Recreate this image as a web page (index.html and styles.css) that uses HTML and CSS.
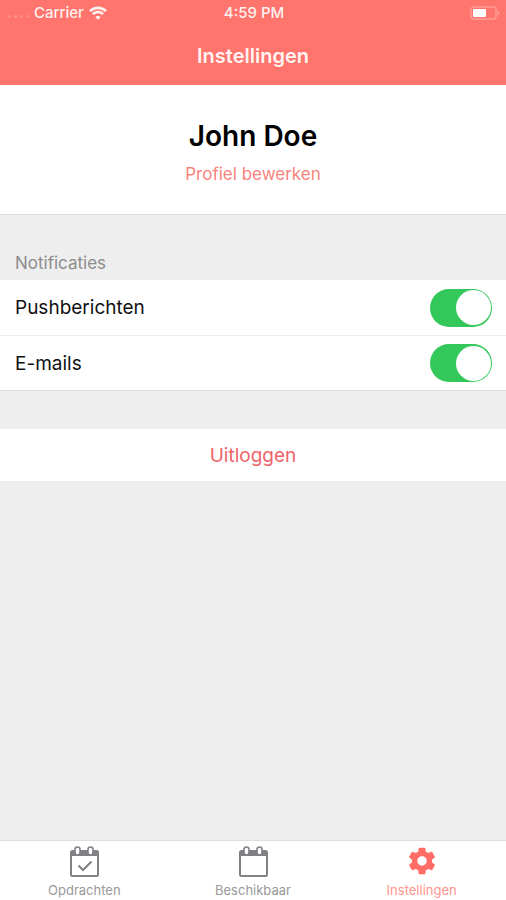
FILE: index.html
```html
<!DOCTYPE html>
<html lang="nl">
<head>
<meta charset="utf-8">
<meta name="viewport" content="width=device-width, initial-scale=1">
<title>Instellingen</title>
<link rel="stylesheet" href="styles.css">
</head>
<body>
<header class="header">
  <div class="status">
    <div class="status-left">
      <span class="signal"><i></i><i></i><i></i><i></i></span>
      <span>Carrier</span>
      <svg class="wifi" viewBox="0 0 18 14" aria-hidden="true">
        <path d="M1 5.2C5.5 .7 12.500 .7 17 5.200M3.900 8.100C6.800 5.300 11.200 5.300 14.100 8.100" fill="none" stroke="currentColor" stroke-width="2.600"/>
        <path d="M9 13.700L6.300 11C7.800 9.600 10.200 9.600 11.700 11Z" fill="currentColor"/>
      </svg>
    </div>
    <span class="time">4:59 PM</span>
    <svg class="battery" viewBox="0 0 30 14" aria-hidden="true">
      <rect x="1" y="1" width="25" height="12" rx="3" fill="none" stroke="#ff9c95" stroke-width="1.500"/>
      <rect x="3" y="3" width="13" height="8" rx="1" fill="#fff"/>
      <path d="M27.500 4.500Q32 7 27.500 9.500Z" fill="#ff9c95"/>
    </svg>
  </div>
  <h1 class="title">Instellingen</h1>
</header>
<main class="content">
  <section class="profile">
    <h2 class="name">John Doe</h2>
    <a class="edit" href="#profiel">Profiel bewerken</a>
  </section>
  <section>
    <h3 class="label">Notificaties</h3>
    <div class="list">
      <label class="row" for="push">Pushberichten<input class="switch" id="push" type="checkbox" checked></label>
      <label class="row" for="mail">E-mails<input class="switch" id="mail" type="checkbox" checked></label>
    </div>
  </section>
  <button class="logout" type="button">Uitloggen</button>
</main>
<nav class="tabs">
  <a class="tab" href="#opdrachten">
    <svg class="icon" viewBox="0 0 32 32" aria-hidden="true">
      <rect x="3" y="6" width="27" height="25" rx="1.500" fill="none" stroke="currentColor" stroke-width="2"/>
      <path d="M3 6H30V11H3Z" fill="currentColor"/>
      <rect x="7" y="2" width="5" height="8" rx="2.500" fill="#fff" stroke="currentColor" stroke-width="1.600"/>
      <rect x="20" y="2" width="5" height="8" rx="2.500" fill="#fff" stroke="currentColor" stroke-width="1.600"/>
      <path d="M10.500 20.500L15 25L23.500 16.500" fill="none" stroke="currentColor" stroke-width="2"/>
    </svg>
    <span>Opdrachten</span>
  </a>
  <a class="tab" href="#beschikbaar">
    <svg class="icon" viewBox="0 0 32 32" aria-hidden="true">
      <rect x="3" y="6" width="27" height="25" rx="1.500" fill="none" stroke="currentColor" stroke-width="2"/>
      <path d="M3 6H30V11H3Z" fill="currentColor"/>
      <rect x="7" y="2" width="5" height="8" rx="2.500" fill="#fff" stroke="currentColor" stroke-width="1.600"/>
      <rect x="20" y="2" width="5" height="8" rx="2.500" fill="#fff" stroke="currentColor" stroke-width="1.600"/>
    </svg>
    <span>Beschikbaar</span>
  </a>
  <a class="tab active" href="#instellingen" aria-current="page">
    <svg class="icon" viewBox="0 0 24 24" aria-hidden="true">
      <path fill="currentColor" d="M19.430 12.980c.04-.32.07-.64.07-.98s-.03-.66-.07-.98l2.110-1.650c.19-.15.24-.42.12-.64l-2-3.460c-.12-.22-.39-.3-.61-.22l-2.490 1c-.52-.4-1.080-.73-1.690-.98l-.38-2.650C14.460 2.180 14.250 2 14 2h-4c-.25 0-.46.18-.49.42l-.38 2.650c-.61.25-1.170.59-1.690.98l-2.490-1c-.23-.09-.49 0-.61.22l-2 3.460c-.13.22-.07.49.12.64l2.110 1.650c-.04.32-.07.65-.07.98s.03.66.07.98l-2.110 1.650c-.19.15-.24.42-.12.64l2 3.460c.12.22.39.3.61.22l2.490-1c.52.4 1.080.73 1.690.98l.38 2.650c.03.24.24.42.49.42h4c.25 0 .46-.18.49-.42l.38-2.650c.61-.25 1.170-.59 1.690-.98l2.490 1c.23.09.49 0 .61-.22l2-3.460c.12-.22.07-.49-.12-.64l-2.110-1.650zM12 15.500c-1.930 0-3.500-1.570-3.500-3.500s1.570-3.500 3.500-3.500 3.500 1.570 3.500 3.500-1.570 3.500-3.500 3.500z"/>
    </svg>
    <span>Instellingen</span>
  </a>
</nav>
</body>
</html>
```
FILE: styles.css
```css
* {
  box-sizing: border-box;
}

body {
  display: flex;
  flex-direction: column;
  min-height: 100vh;
  margin: 0;
  background: #eee;
  color: #111;
  font-family: Inter, "Liberation Sans", sans-serif;
}

h1,
h2,
h3 {
  margin: 0;
}

a {
  text-decoration: none;
}

.header {
  padding-bottom: 15px;
  background: #ff746c;
  color: #fff;
}

.status {
  display: grid;
  grid-template-columns: 1fr auto 1fr;
  align-items: center;
  height: 25px;
  padding: 0 6px 0 8px;
  color: #fff2f1;
  font-size: 15px;
  font-weight: 500;
}

.status-left {
  display: flex;
  align-items: center;
  gap: 5px;
}

.signal {
  display: flex;
  gap: 3px;
  padding-top: 8px;
}

.signal i {
  width: 3px;
  height: 3px;
  border-radius: 50%;
  background: #ff918a;
}

.wifi {
  width: 18px;
  height: 14px;
}

.battery {
  justify-self: end;
  width: 30px;
  height: 14px;
}

.title {
  padding-top: 17px;
  color: #fff2f1;
  font-size: 20px;
  font-weight: 600;
  line-height: 28px;
  text-align: center;
}

.content {
  flex: 1;
}

.profile {
  display: flex;
  flex-direction: column;
  align-items: center;
  gap: 9px;
  padding: 34px 16px 28px;
  border-bottom: 1px solid #ddd;
  background: #fff;
}

.name {
  color: #000;
  font-size: 28px;
  font-weight: 600;
  line-height: 34px;
}

.edit {
  color: #f9837d;
  font-size: 17px;
  line-height: 24px;
}

.label {
  padding: 36px 15px 5px;
  color: #8c8c8c;
  font-size: 17px;
  font-weight: 400;
  line-height: 24px;
}

.list {
  border-bottom: 1px solid #ddd;
  background: #fff;
}

.row {
  display: flex;
  align-items: center;
  justify-content: space-between;
  height: 55px;
  padding: 0 14px 0 15px;
  font-size: 19px;
}

.row + .row {
  border-top: 1px solid #eee;
}

.switch {
  display: flex;
  align-items: center;
  justify-content: flex-end;
  width: 62px;
  height: 38px;
  margin: 0;
  padding: 0 1px;
  border-radius: 19px;
  background: #34c759;
  appearance: none;
}

.switch::before {
  width: 35px;
  height: 35px;
  border-radius: 50%;
  background: #fff;
  content: "";
}

.switch:not(:checked) {
  justify-content: flex-start;
  background: #ddd;
}

.logout {
  display: block;
  width: 100%;
  height: 52px;
  margin-top: 38px;
  border: 0;
  background: #fff;
  color: #f0646a;
  font-family: inherit;
  font-size: 19px;
}

.tabs {
  display: grid;
  grid-template-columns: repeat(3, 1fr);
  padding: 4px 0 2px;
  border-top: 1px solid #ddd;
  background: #fff;
}

.tab {
  display: flex;
  flex-direction: column;
  align-items: center;
  gap: 5px;
  color: #999;
  font-size: 13px;
  line-height: 16px;
}

.icon {
  width: 32px;
  height: 32px;
  color: #808085;
}

.active {
  color: #ff938d;
}

.active .icon {
  color: #ff6d66;
}
```
